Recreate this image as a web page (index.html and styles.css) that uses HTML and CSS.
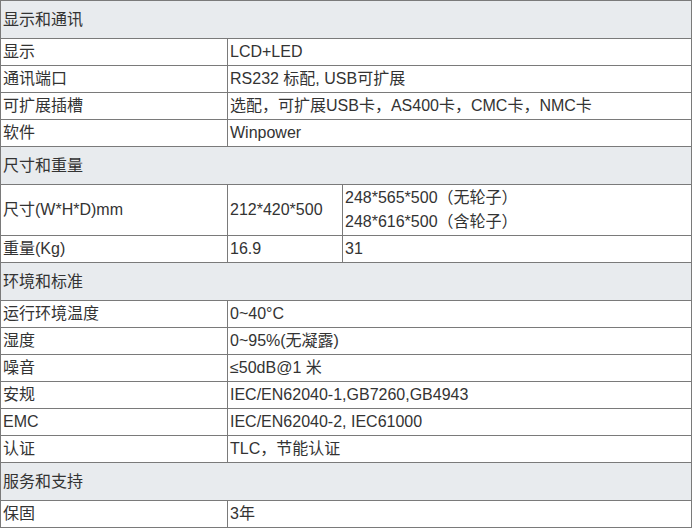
FILE: index.html
```html
<!DOCTYPE html>
<html lang="zh-CN">

<head>
    <meta charset="UTF-8">
    <meta name="viewport" content="width=device-width, initial-scale=1.0">
    <title>规格参数</title>
    <link rel="stylesheet" href="styles.css">
</head>

<body>
    <table class="spec-table">
        <colgroup>
            <col class="col-name">
            <col class="col-a">
            <col class="col-b">
        </colgroup>
        <tr class="section">
            <td colspan="3">显示和通讯</td>
        </tr>
        <tr>
            <td>显示</td>
            <td colspan="2">LCD+LED</td>
        </tr>
        <tr>
            <td>通讯端口</td>
            <td colspan="2">RS232 标配, USB可扩展</td>
        </tr>
        <tr>
            <td>可扩展插槽</td>
            <td colspan="2">选配，可扩展USB卡，AS400卡，CMC卡，NMC卡</td>
        </tr>
        <tr>
            <td>软件</td>
            <td colspan="2">Winpower</td>
        </tr>

        <tr class="section">
            <td colspan="3">尺寸和重量</td>
        </tr>
        <tr class="tall">
            <td>尺寸(W*H*D)mm</td>
            <td>212*420*500</td>
            <td>248*565*500（无轮子）<br>248*616*500（含轮子）</td>
        </tr>
        <tr>
            <td>重量(Kg)</td>
            <td>16.9</td>
            <td>31</td>
        </tr>

        <tr class="section">
            <td colspan="3">环境和标准</td>
        </tr>
        <tr>
            <td>运行环境温度</td>
            <td colspan="2">0~40°C</td>
        </tr>
        <tr>
            <td>湿度</td>
            <td colspan="2">0~95%(无凝露)</td>
        </tr>
        <tr>
            <td>噪音</td>
            <td colspan="2">≤50dB@1 米</td>
        </tr>
        <tr>
            <td>安规</td>
            <td colspan="2">IEC/EN62040-1,GB7260,GB4943</td>
        </tr>
        <tr>
            <td>EMC</td>
            <td colspan="2">IEC/EN62040-2, IEC61000</td>
        </tr>
        <tr>
            <td>认证</td>
            <td colspan="2">TLC，节能认证</td>
        </tr>

        <tr class="section">
            <td colspan="3">服务和支持</td>
        </tr>
        <tr>
            <td>保固</td>
            <td colspan="2">3年</td>
        </tr>
    </table>
</body>

</html>
```

FILE: styles.css
```css
body {
    margin: 0;
    padding: 0;
    background-color: white;
    color: #333;
    font-family: "Liberation Sans", Arial, "Noto Sans CJK SC", sans-serif;
    font-size: 16px;
}

.spec-table {
    width: 692px;
    border-collapse: collapse;
    table-layout: fixed;
    border: 1px solid #7a7a7a;
}

.col-name {
    width: 227px;
}

.col-a {
    width: 115px;
}

.spec-table td {
    border: 1px solid #7a7a7a;
    padding: 0 2px;
    height: 26px;
    line-height: 24px;
    vertical-align: middle;
    white-space: nowrap;
}

.section td {
    height: 37px;
    background-color: #e8ebee;
}

.tall td {
    height: 50px;
}
```
